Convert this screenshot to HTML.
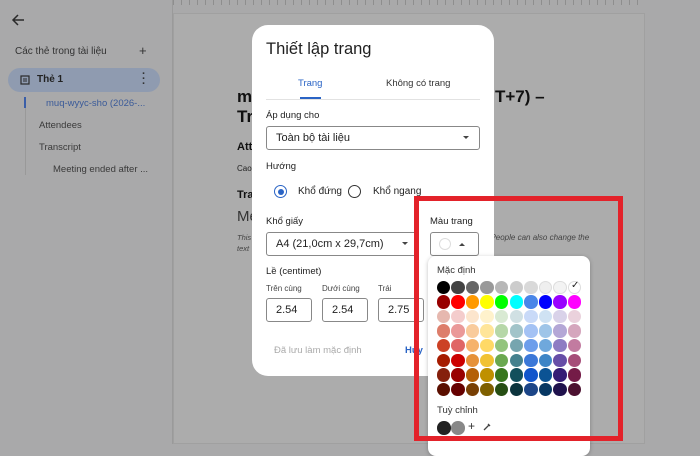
<!DOCTYPE html>
<html><head><meta charset="utf-8"><style>
*{margin:0;padding:0;box-sizing:border-box}
body{width:700px;height:444px;overflow:hidden;background:#a9a9aa;font-family:"Liberation Sans",Arial,sans-serif;position:relative;color:#1f1f1f}
.a{position:absolute;white-space:nowrap}
.sw{position:absolute;width:13.5px;height:13.5px;border-radius:50%}
</style></head><body>
<div class="a" style="left:173px;top:0;width:472px;height:5px;background:repeating-linear-gradient(90deg,#8e8e8e 0 1px,transparent 1px 8px)"></div>
<div class="a" style="left:172px;top:0;width:1px;height:444px;background:#9a9a9a"></div>
<div class="a" style="left:173px;top:13px;width:472px;height:431px;background:#acacac;border:1px solid #a0a0a0"></div>
<svg class="a" style="left:11px;top:13px" width="14" height="14" viewBox="0 0 14 14"><path d="M13 7H2M7 2L2 7l5 5" stroke="#2a2a2a" stroke-width="1.5" fill="none"/></svg>
<div class="a" style="left:15px;top:46px;font-size:10px;color:#333">Các thẻ trong tài liệu</div>
<div class="a" style="left:139px;top:43px;font-size:13px;color:#333">+</div>
<div class="a" style="left:8px;top:68px;width:152px;height:24px;border-radius:12px;background:#8f9bb0"></div>
<svg class="a" style="left:20px;top:75px" width="10" height="10"><rect x="1" y="1" width="8" height="8" fill="none" stroke="#2a2a2a" stroke-width="1.2"/><path d="M3 4h4M3 6h4" stroke="#2a2a2a"/></svg>
<div class="a" style="left:37px;top:74px;font-size:10px;font-weight:bold;color:#222">Thẻ 1</div>
<div class="a" style="left:142px;top:72px;font-size:11px;font-weight:bold;color:#333;line-height:5px;width:3px;text-align:center">·<br>·<br>·</div>
<div class="a" style="left:25px;top:97px;width:1px;height:78px;background:#999"></div>
<div class="a" style="left:24px;top:97px;width:2px;height:11px;background:#3a5ea8"></div>
<div class="a" style="left:46px;top:98px;font-size:9.5px;color:#3a5a99">muq-wyyc-sho (2026-...</div>
<div class="a" style="left:39px;top:120px;font-size:9.5px;color:#3a3a3a">Attendees</div>
<div class="a" style="left:39px;top:142px;font-size:9.5px;color:#3a3a3a">Transcript</div>
<div class="a" style="left:53px;top:164px;font-size:9.5px;color:#3a3a3a">Meeting ended after ...</div>
<div class="a" style="left:237px;top:87px;font-size:17px;font-weight:bold;color:#111">m</div>
<div class="a" style="left:495px;top:87px;font-size:17px;font-weight:bold;color:#111">T+7) –</div>
<div class="a" style="left:237px;top:107px;font-size:17px;font-weight:bold;color:#111">Tr</div>
<div class="a" style="left:237px;top:141px;font-size:11px;font-weight:bold;color:#111">Att</div>
<div class="a" style="left:237px;top:164px;font-size:8px;color:#222">Cao</div>
<div class="a" style="left:237px;top:189px;font-size:11px;font-weight:bold;color:#111">Tra</div>
<div class="a" style="left:237px;top:208px;font-size:15px;color:#333">Me</div>
<div class="a" style="left:237px;top:233px;font-size:7.5px;font-style:italic;color:#444">This</div>
<div class="a" style="left:237px;top:244px;font-size:7.5px;font-style:italic;color:#444">text</div>
<div class="a" style="left:486px;top:233px;font-size:8px;font-style:italic;color:#444">. People can also change the</div>
<div class="a" style="left:252px;top:25px;width:242px;height:351px;background:#fff;border-radius:16px"></div>
<div class="a" style="left:266px;top:40px;font-size:16.5px;color:#1f1f1f">Thiết lập trang</div>
<div class="a" style="left:298px;top:78px;font-size:9.5px;color:#2a64c5">Trang</div>
<div class="a" style="left:386px;top:78px;font-size:9.5px;color:#333">Không có trang</div>
<div class="a" style="left:266px;top:99px;width:214px;height:1px;background:#e2e2e2"></div>
<div class="a" style="left:300px;top:97px;width:21px;height:2px;background:#2a64c5"></div>
<div class="a" style="left:266px;top:110px;font-size:9.5px;color:#222">Áp dụng cho</div>
<div class="a" style="left:266px;top:126px;width:214px;height:24px;border:1px solid #888;border-radius:3px"></div>
<div class="a" style="left:276px;top:132px;font-size:11px;color:#222">Toàn bộ tài liệu</div>
<div class="a" style="left:463px;top:136px;border:3px solid transparent;border-top:3px solid #444"></div>
<div class="a" style="left:266px;top:161px;font-size:9.5px;color:#222">Hướng</div>
<div class="a" style="left:274px;top:185px;width:13px;height:13px;border-radius:50%;border:1.5px solid #2a64c5"></div>
<div class="a" style="left:277.5px;top:188.5px;width:6px;height:6px;border-radius:50%;background:#2a64c5"></div>
<div class="a" style="left:298px;top:186px;font-size:10px;color:#222">Khổ đứng</div>
<div class="a" style="left:348px;top:185px;width:13px;height:13px;border-radius:50%;border:1.5px solid #333"></div>
<div class="a" style="left:373px;top:186px;font-size:10px;color:#222">Khổ ngang</div>
<div class="a" style="left:266px;top:216px;font-size:9.5px;color:#222">Khổ giấy</div>
<div class="a" style="left:266px;top:232px;width:153px;height:24px;border:1px solid #888;border-radius:3px"></div>
<div class="a" style="left:276px;top:238px;font-size:11px;color:#222">A4 (21,0cm x 29,7cm)</div>
<div class="a" style="left:402px;top:242px;border:3px solid transparent;border-top:3px solid #444"></div>
<div class="a" style="left:430px;top:216px;font-size:9.5px;color:#222">Màu trang</div>
<div class="a" style="left:430px;top:232px;width:49px;height:24px;border:1px solid #888;border-radius:3px"></div>
<div class="a" style="left:439px;top:238px;width:12px;height:12px;border-radius:50%;border:1px solid #ddd"></div>
<div class="a" style="left:459px;top:240px;border:3px solid transparent;border-bottom:3px solid #444"></div>
<div class="a" style="left:266px;top:266px;font-size:9.5px;color:#222">Lề (centimet)</div>
<div class="a" style="left:266px;top:284px;font-size:8px;color:#444">Trên cùng</div>
<div class="a" style="left:322px;top:284px;font-size:8px;color:#444">Dưới cùng</div>
<div class="a" style="left:378px;top:284px;font-size:8px;color:#444">Trái</div>
<div class="a" style="left:266px;top:298px;width:46px;height:24px;border:1px solid #888;border-radius:3px;font-size:11px;padding:5px 0 0 9px">2.54</div>
<div class="a" style="left:322px;top:298px;width:46px;height:24px;border:1px solid #888;border-radius:3px;font-size:11px;padding:5px 0 0 9px">2.54</div>
<div class="a" style="left:378px;top:298px;width:46px;height:24px;border:1px solid #888;border-radius:3px;font-size:11px;padding:5px 0 0 9px">2.75</div>
<div class="a" style="left:274px;top:345px;font-size:9.5px;color:#aaa">Đã lưu làm mặc định</div>
<div class="a" style="left:405px;top:345px;font-size:9.5px;color:#2a64c5;font-weight:bold">Hủy</div>
<div class="a" style="left:428px;top:256px;width:162px;height:200px;background:#fff;border-radius:8px;box-shadow:0 1px 4px rgba(0,0,0,.25)"></div>
<div class="a" style="left:437px;top:265px;font-size:9.5px;color:#333">Mặc định</div>
<div id="g"></div>
<div class="a" style="left:437px;top:405px;font-size:9.5px;color:#333">Tuỳ chỉnh</div>
<div class="sw" style="left:437px;top:421px;background:#222"></div>
<div class="sw" style="left:451px;top:421px;background:#888"></div>
<div class="a" style="left:468px;top:419px;font-size:12px;color:#333">+</div>
<svg class="a" style="left:482px;top:421px" width="11" height="11"><path d="M2 9l5-5M6 3l2 2M3 8l-1 1" stroke="#444" stroke-width="1.3" fill="none"/></svg>
<div class="a" style="left:414px;top:196px;width:209px;height:245px;border:5px solid #e3222a"></div>
<script>
var rows=[["#000000","#434343","#666666","#999999","#b7b7b7","#cccccc","#d9d9d9","#efefef","#f3f3f3","#ffffff"],
["#980000","#ff0000","#ff9900","#ffff00","#00ff00","#00ffff","#4a86e8","#0000ff","#9900ff","#ff00ff"],
["#e6b8af","#f4cccc","#fce5cd","#fff2cc","#d9ead3","#d0e0e3","#c9daf8","#cfe2f3","#d9d2e9","#ead1dc"],
["#dd7e6b","#ea9999","#f9cb9c","#ffe599","#b6d7a8","#a2c4c9","#a4c2f4","#9fc5e8","#b4a7d6","#d5a6bd"],
["#cc4125","#e06666","#f6b26b","#ffd966","#93c47d","#76a5af","#6d9eeb","#6fa8dc","#8e7cc3","#c27ba0"],
["#a61c00","#cc0000","#e69138","#f1c232","#6aa84f","#45818e","#3c78d8","#3d85c6","#674ea7","#a64d79"],
["#85200c","#990000","#b45f06","#bf9000","#38761d","#134f5c","#1155cc","#0b5394","#351c75","#741b47"],
["#5b0f00","#660000","#783f04","#7f6000","#274e13","#0c343d","#1c4587","#073763","#20124d","#4c1130"]];
var h="";for(var r=0;r<8;r++)for(var c=0;c<10;c++){var x=436.5+c*14.6,y=280.5+r*14.6;var b=(r==0&&c>=7)?"border:1px solid #ddd;":"";h+='<div class="sw" style="left:'+x+'px;top:'+y+'px;background:'+rows[r][c]+';'+b+'"></div>';}
h+='<div class="a" style="left:571px;top:280px;font-size:10px;color:#222">✓</div>';
document.getElementById("g").innerHTML=h;
</script>
</body></html>
